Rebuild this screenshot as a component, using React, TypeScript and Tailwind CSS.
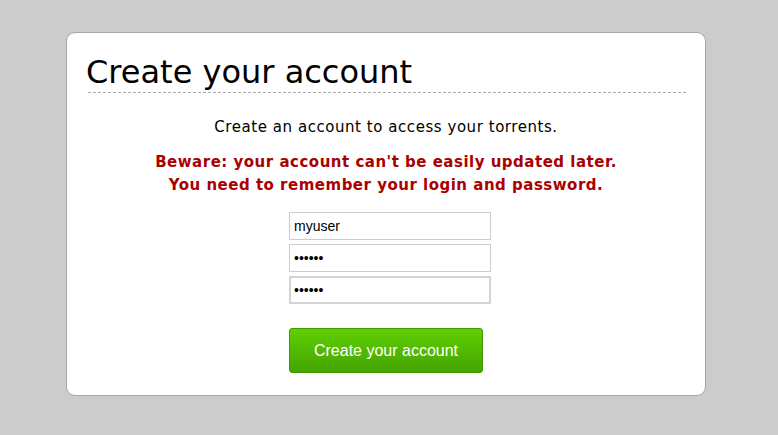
export default function App() {
  return (
    <div className="min-h-screen bg-[#cccccc] pt-[32px]" style={{ height: 435 }}>
      <div className="ml-[66px] w-[640px] h-[364px] bg-white border border-[#a6a6a6] rounded-[9px] pl-[21px] pr-[19px] pt-[19px] font-['DejaVu_Sans',Verdana,sans-serif]">
        <h1 className="text-[32px] leading-[40px] text-black border-b border-dashed border-[#aaaaaa]">
          <span className="-ml-[2px]">Create your account</span>
        </h1>
        <p className="mt-[24px] pr-[2px] text-center text-[15px] tracking-[0.55px] text-black leading-[20px]">
          Create an account to access your torrents.
        </p>
        <div className="mt-[14px] pr-[2px] text-center text-[15px] tracking-[0.5px] font-bold text-[#aa0000] leading-[23px]">
          <div>Beware: your account can't be easily updated later.</div>
          <div>You need to remember your login and password.</div>
        </div>
        <form className="w-[210px] mx-auto pl-[7px] mt-[15px] flex flex-col gap-[4px] font-['Liberation_Sans',Arial,sans-serif]">
          <input
            className="w-[202px] h-[28px] border border-[#cdcdcd] px-[4px] text-[14px] text-black outline-none"
            defaultValue="myuser"
          />
          <input
            type="password"
            className="w-[202px] h-[28px] border border-[#cdcdcd] px-[4px] text-[14px] text-black outline-none"
            defaultValue="123456"
          />
          <input
            type="password"
            className="w-[202px] h-[28px] border-2 border-[#d4d4d4] px-[3px] text-[14px] text-black outline-none"
            defaultValue="123456"
          />
          <button
            type="button"
            className="mt-[20px] w-[194px] h-[45px] rounded-[3px] border border-[#3f9a05] bg-gradient-to-b from-[#5fd000] to-[#45a303] text-white text-[16px]"
          >
            Create your account
          </button>
        </form>
      </div>
    </div>
  )
}
